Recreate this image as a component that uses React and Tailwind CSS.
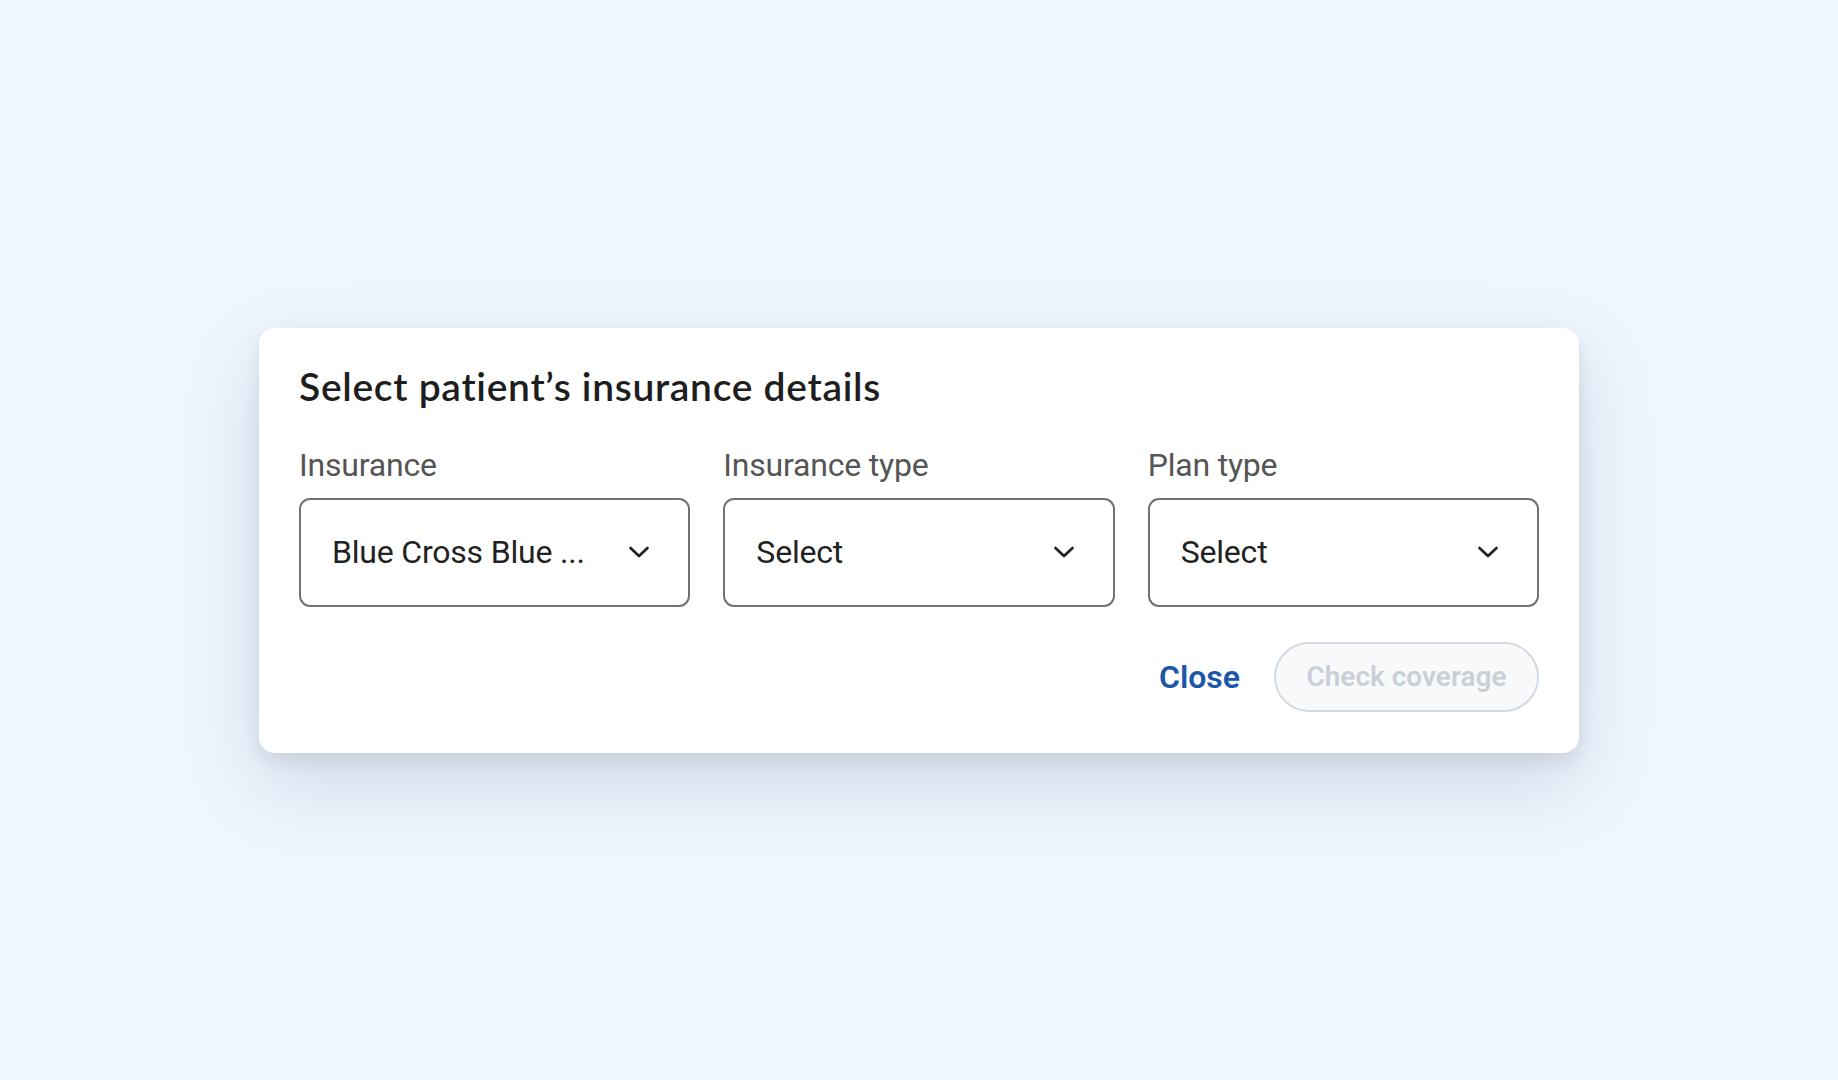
import React from "react";

function Chevron() {
  return (
    <svg width="22" height="14" viewBox="0 0 22 14" fill="none" className="shrink-0">
      <path d="M2.5 3 L11 11 L19.5 3" stroke="#222" strokeWidth="2.7" strokeLinecap="round" strokeLinejoin="round" />
    </svg>
  );
}

function Field({ label, value }) {
  return (
    <div className="flex flex-col">
      <div className="text-[32px] leading-[38px] text-[#555555] tracking-[-0.2px]">{label}</div>
      <div className="mt-[14px] h-[109px] rounded-[11px] border-2 border-[#727272] flex items-center justify-between pl-[31px] pr-[38px]">
        <span className="text-[32px] text-[#222222] tracking-[-0.2px]">{value}</span>
        <Chevron />
      </div>
    </div>
  );
}

export default function App() {
  return (
    <div
      className="min-h-screen w-full bg-[#eff6ff] flex items-center justify-center"
      style={{ fontFamily: "Roboto, 'Liberation Sans', sans-serif" }}
    >
      <div className="w-[1320px] h-[425px] bg-white rounded-[16px] shadow-[0_8px_18px_rgba(20,30,50,0.08),0_30px_80px_rgba(30,50,80,0.15)] px-[40px] pt-[34px] pb-[41px] flex flex-col">
        <h1
          className="text-[39px] leading-[48px] font-semibold text-[#1e1e1e] tracking-[0.7px]"
          style={{ fontFamily: "Lato, 'Noto Sans', sans-serif" }}
        >
          Select patient’s insurance details
        </h1>
        <div className="mt-[36px] grid grid-cols-3 gap-[33px]">
          <Field label="Insurance" value="Blue Cross Blue ..." />
          <Field label="Insurance type" value="Select" />
          <Field label="Plan type" value="Select" />
        </div>
        <div className="mt-auto flex items-center justify-end gap-[34px]">
          <button className="text-[32px] font-semibold text-[#1a57a6]">Close</button>
          <button className="w-[265px] h-[70px] rounded-full border-2 border-[#d3dae3] bg-[#f8f9fb] text-[28px] font-semibold text-[#c9d0d8]">
            Check coverage
          </button>
        </div>
      </div>
    </div>
  );
}
